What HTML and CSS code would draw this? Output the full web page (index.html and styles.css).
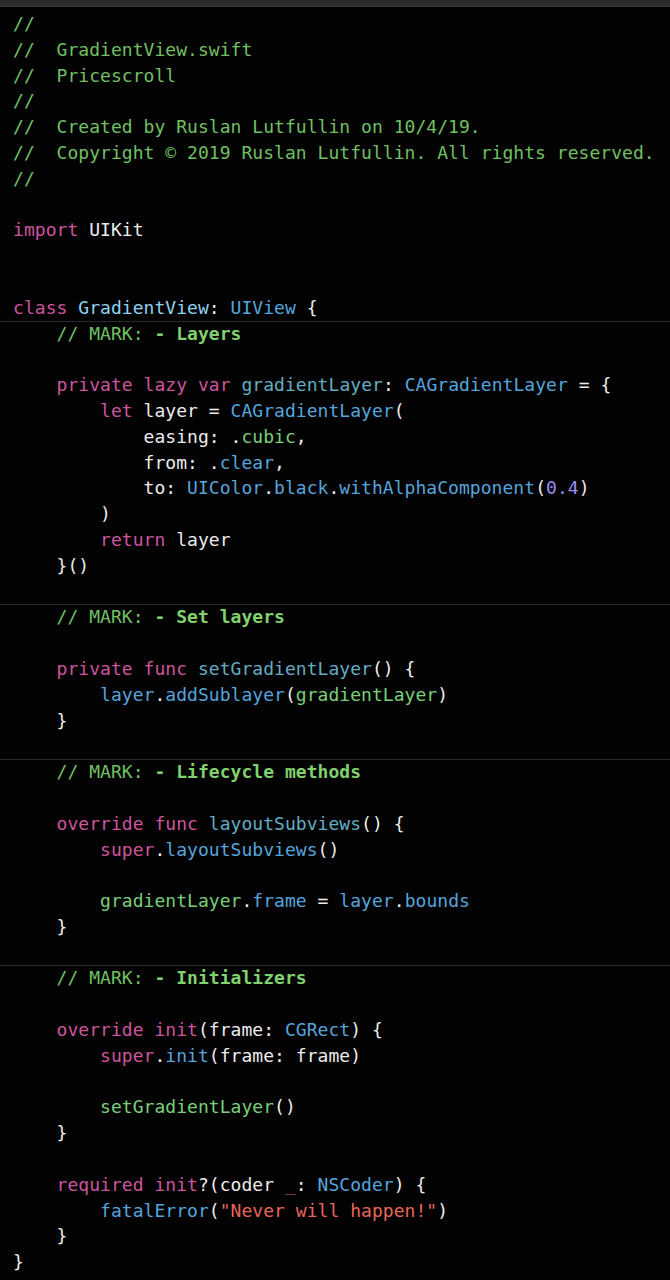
FILE: index.html
```html
<!DOCTYPE html>
<html>
<head>
<meta charset="utf-8">
<link rel="stylesheet" href="styles.css">
</head>
<body>
<div class="titlebar"></div>
<div class="editor">
<div class="ln"><span class="c">//</span></div>
<div class="ln"><span class="c">//  GradientView.swift</span></div>
<div class="ln"><span class="c">//  Pricescroll</span></div>
<div class="ln"><span class="c">//</span></div>
<div class="ln"><span class="c">//  Created by Ruslan Lutfullin on 10/4/19.</span></div>
<div class="ln"><span class="c">//  Copyright © 2019 Ruslan Lutfullin. All rights reserved.</span></div>
<div class="ln"><span class="c">//</span></div>
<div class="ln"> </div>
<div class="ln"><span class="k">import</span> UIKit</div>
<div class="ln"> </div>
<div class="ln"> </div>
<div class="ln"><span class="k">class</span> <span class="cd">GradientView</span>: <span class="t">UIView</span> {</div>
<div class="ln sep">    <span class="c">// MARK: <b class="m">- Layers</b></span></div>
<div class="ln"> </div>
<div class="ln">    <span class="k">private</span> <span class="k">lazy</span> <span class="k">var</span> <span class="d">gradientLayer</span>: <span class="t">CAGradientLayer</span> = {</div>
<div class="ln">        <span class="k">let</span> layer = <span class="t">CAGradientLayer</span>(</div>
<div class="ln">            easing: .<span class="p">cubic</span>,</div>
<div class="ln">            from: .<span class="t">clear</span>,</div>
<div class="ln">            to: <span class="t">UIColor</span>.<span class="t">black</span>.<span class="t">withAlphaComponent</span>(<span class="n">0.4</span>)</div>
<div class="ln">        )</div>
<div class="ln">        <span class="k">return</span> layer</div>
<div class="ln">    }()</div>
<div class="ln"> </div>
<div class="ln sep">    <span class="c">// MARK: <b class="m">- Set layers</b></span></div>
<div class="ln"> </div>
<div class="ln">    <span class="k">private</span> <span class="k">func</span> <span class="d">setGradientLayer</span>() {</div>
<div class="ln">        <span class="t">layer</span>.<span class="t">addSublayer</span>(<span class="p">gradientLayer</span>)</div>
<div class="ln">    }</div>
<div class="ln"> </div>
<div class="ln sep">    <span class="c">// MARK: <b class="m">- Lifecycle methods</b></span></div>
<div class="ln"> </div>
<div class="ln">    <span class="k">override</span> <span class="k">func</span> <span class="d">layoutSubviews</span>() {</div>
<div class="ln">        <span class="k">super</span>.<span class="t">layoutSubviews</span>()</div>
<div class="ln"> </div>
<div class="ln">        <span class="p">gradientLayer</span>.<span class="t">frame</span> = <span class="t">layer</span>.<span class="t">bounds</span></div>
<div class="ln">    }</div>
<div class="ln"> </div>
<div class="ln sep">    <span class="c">// MARK: <b class="m">- Initializers</b></span></div>
<div class="ln"> </div>
<div class="ln">    <span class="k">override</span> <span class="k">init</span>(frame: <span class="t">CGRect</span>) {</div>
<div class="ln">        <span class="k">super</span>.<span class="t">init</span>(frame: frame)</div>
<div class="ln"> </div>
<div class="ln">        <span class="p">setGradientLayer</span>()</div>
<div class="ln">    }</div>
<div class="ln"> </div>
<div class="ln">    <span class="k">required</span> <span class="k">init</span>?(coder <span class="k">_</span>: <span class="t">NSCoder</span>) {</div>
<div class="ln">        <span class="t">fatalError</span>(<span class="s">"Never will happen!"</span>)</div>
<div class="ln">    }</div>
<div class="ln">}</div>
</div>
</body>
</html>
```

FILE: styles.css
```css
html, body {
  margin: 0;
  padding: 0;
  background: #020202;
}

body {
  width: 670px;
  height: 1280px;
  overflow: hidden;
}

.titlebar {
  height: 6px;
  background: #2b2b2e;
  border-bottom: 1px solid #3a3a3d;
}

.editor {
  padding: 4px 0 0 13px;
  font-family: "DejaVu Sans Mono", "Liberation Mono", monospace;
  font-size: 18px;
  letter-spacing: 0.04px;
  line-height: 25.8px;
  color: #ececec;
}

.ln {
  white-space: pre;
  height: 25.8px;
  margin-left: -13px;
  padding-left: 13px;
}

.sep {
  box-shadow: inset 0 1px 0 #2a2a2c;
}

.c { color: #70c062; }
.m { color: #80d26f; font-weight: bold; }
.k { color: #cd559c; }
.t { color: #55a5dc; }
.cd { color: #8dd3ef; }
.d { color: #63adc2; }
.p { color: #79d07a; }
.n { color: #9a8ef2; }
.s { color: #e8665a; }
```
